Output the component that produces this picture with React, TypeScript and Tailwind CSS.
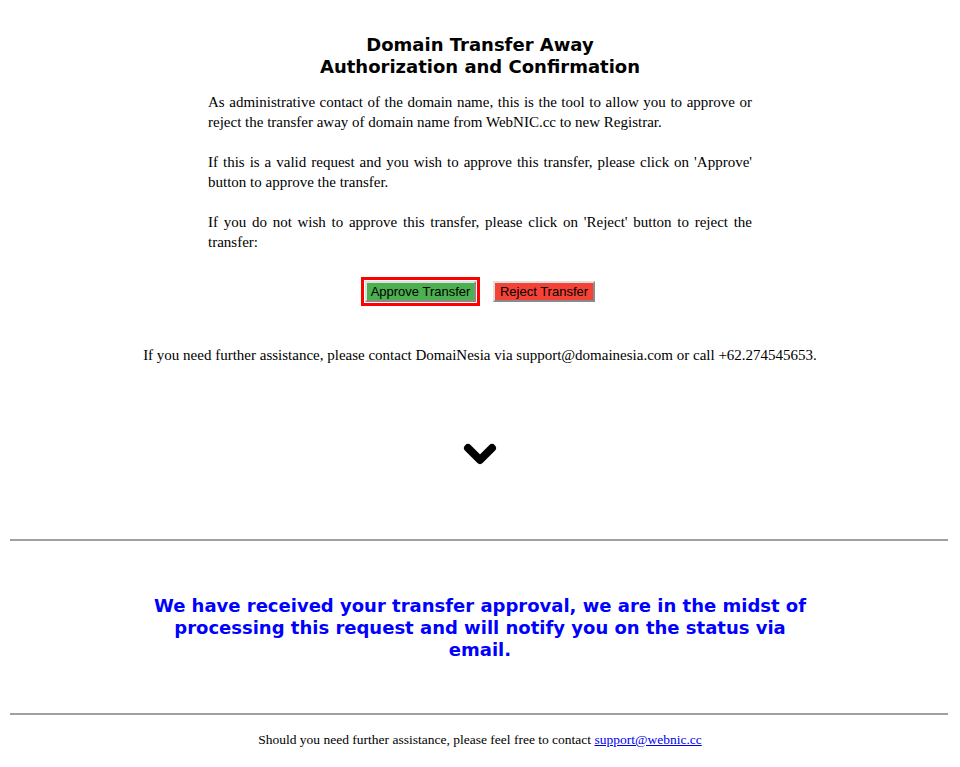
import { ChevronDown } from "lucide-react"

const serif = "font-['Liberation_Serif','Times_New_Roman',serif]"

export default function App() {
  return (
    <div className="min-h-[767px] bg-white text-black">
      <div className="pt-[34px] text-center font-['DejaVu_Sans',Verdana,sans-serif] text-[18px] font-bold leading-[22px]">
        <div>Domain Transfer Away</div>
        <div>Authorization and Confirmation</div>
      </div>

      <div className={`mx-auto mt-[14px] w-[544px] text-justify text-[15px] leading-[20px] ${serif}`}>
        <p>
          As administrative contact of the domain name, this is the tool to allow you to approve or
          reject the transfer away of domain name from WebNIC.cc to new Registrar.
        </p>
        <p className="mt-[20px]">
          If this is a valid request and you wish to approve this transfer, please click on 'Approve'
          button to approve the transfer.
        </p>
        <p className="mt-[20px]">
          If you do not wish to approve this transfer, please click on 'Reject' button to reject the
          transfer:
        </p>
      </div>

      <div className="mt-[25px] flex items-center justify-center gap-[13px] pr-[4px] font-['Liberation_Sans',Arial,sans-serif] text-[13px]">
        <div className="border-[3px] border-[#ff0000] p-[1px]">
          <button
            type="button"
            className="h-[21px] w-[111px] border-2 border-t-[#e0e0e0] border-l-[#e0e0e0] border-r-[#8a8a8a] border-b-[#8a8a8a] bg-[#4caf50] leading-none text-black"
          >
            Approve Transfer
          </button>
        </div>
        <button
          type="button"
          className="h-[21px] w-[102px] border-2 border-t-[#e0e0e0] border-l-[#e0e0e0] border-r-[#8a8a8a] border-b-[#8a8a8a] bg-[#f44336] leading-none text-black"
        >
          Reject Transfer
        </button>
      </div>

      <p className={`mt-[39px] text-center text-[15px] leading-[20px] ${serif}`}>
        If you need further assistance, please contact DomaiNesia via support@domainesia.com or call +62.274545653.
      </p>

      <div className="mt-[65px] flex justify-center">
        <ChevronDown className="h-[48px] w-[48px] text-black" strokeWidth={4} />
      </div>

      <hr className="ml-[10px] mr-[12px] mt-[61px] border-t-2 border-[#a0a0a0]" />

      <div className="mx-auto mt-[54px] w-[660px] text-center font-['DejaVu_Sans',Verdana,sans-serif] text-[18px] font-bold leading-[22px] text-[#0000ff]">
        We have received your transfer approval, we are in the midst of processing this request and will notify you on the status via email.
      </div>

      <hr className="ml-[10px] mr-[12px] mt-[52px] border-t-2 border-[#a0a0a0]" />

      <p className={`mt-[16px] text-center text-[13.5px] leading-[18px] ${serif}`}>
        Should you need further assistance, please feel free to contact{" "}
        <a href="#" className="text-[#0000ee] underline">
          support@webnic.cc
        </a>
      </p>
    </div>
  )
}
